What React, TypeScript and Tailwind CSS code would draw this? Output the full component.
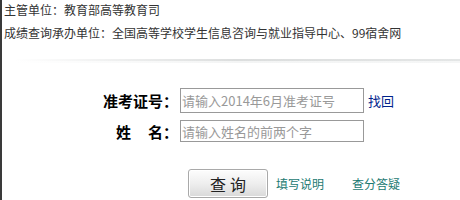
import React from "react";

export default function App() {
  const font = { fontFamily: '"Noto Sans CJK SC", "Noto Sans", sans-serif' };
  return (
    <div className="w-[460px] h-[200px] bg-white overflow-hidden flex" style={font}>
      <div className="w-[2px] h-full bg-[#3a3a3a] shrink-0" />
      <div className="flex-1 flex flex-col">
        <div className="pl-[2px] pt-[1px] text-[12px] leading-[18px] text-[#333]">
          <div>主管单位：教育部高等教育司</div>
          <div className="mt-[5px]">成绩查询承办单位：全国高等学校学生信息咨询与就业指导中心、99宿舍网</div>
        </div>
        <div className="mt-[17px] ml-[12px] h-[2px] bg-gradient-to-r from-white via-[#dcdede] to-[#e4e6e6]" />
        <div className="h-[2px] ml-[12px] bg-gradient-to-r from-white via-[#f3f4f4] to-[#f5f6f6]" />
        <div className="mt-[25px] flex flex-col">
          <div className="flex items-center h-[25px]">
            <div className="w-[178px] pr-[2px] text-right text-[15px] font-bold text-black leading-none">准考证号：</div>
            <div className="w-[184px] h-[25px] border border-[#999] flex items-center px-[1px] text-[13px] text-[#999] leading-none">请输入2014年6月准考证号</div>
            <a className="ml-[4px] text-[13px] text-[#00238c] leading-none">找回</a>
          </div>
          <div className="flex items-center h-[22px] mt-[7px]">
            <div className="w-[178px] pr-[2px] text-right text-[15px] font-bold text-black leading-none">
              姓<span className="inline-block w-[17px]" />名：
            </div>
            <div className="w-[184px] h-[22px] border border-[#999] flex items-center px-[1px] text-[13px] text-[#999] leading-none">请输入姓名的前两个字</div>
          </div>
          <div className="flex items-center mt-[27px] h-[29px]">
            <div className="w-[186px]" />
            <button className="w-[80px] h-[29px] rounded-[3px] border border-[#a9a9a9] bg-gradient-to-b from-[#fdfdfd] via-[#eeeeee] to-[#d9d9d9] shadow-[inset_0_0_0_1px_#fff] text-[16px] text-[#222] tracking-[4px] leading-none pl-[4px]">查询</button>
            <a className="ml-[8px] text-[12px] text-[#1b7a72] leading-none">填写说明</a>
            <a className="ml-[28px] text-[12px] text-[#1b7a72] leading-none">查分答疑</a>
          </div>
        </div>
      </div>
    </div>
  );
}
